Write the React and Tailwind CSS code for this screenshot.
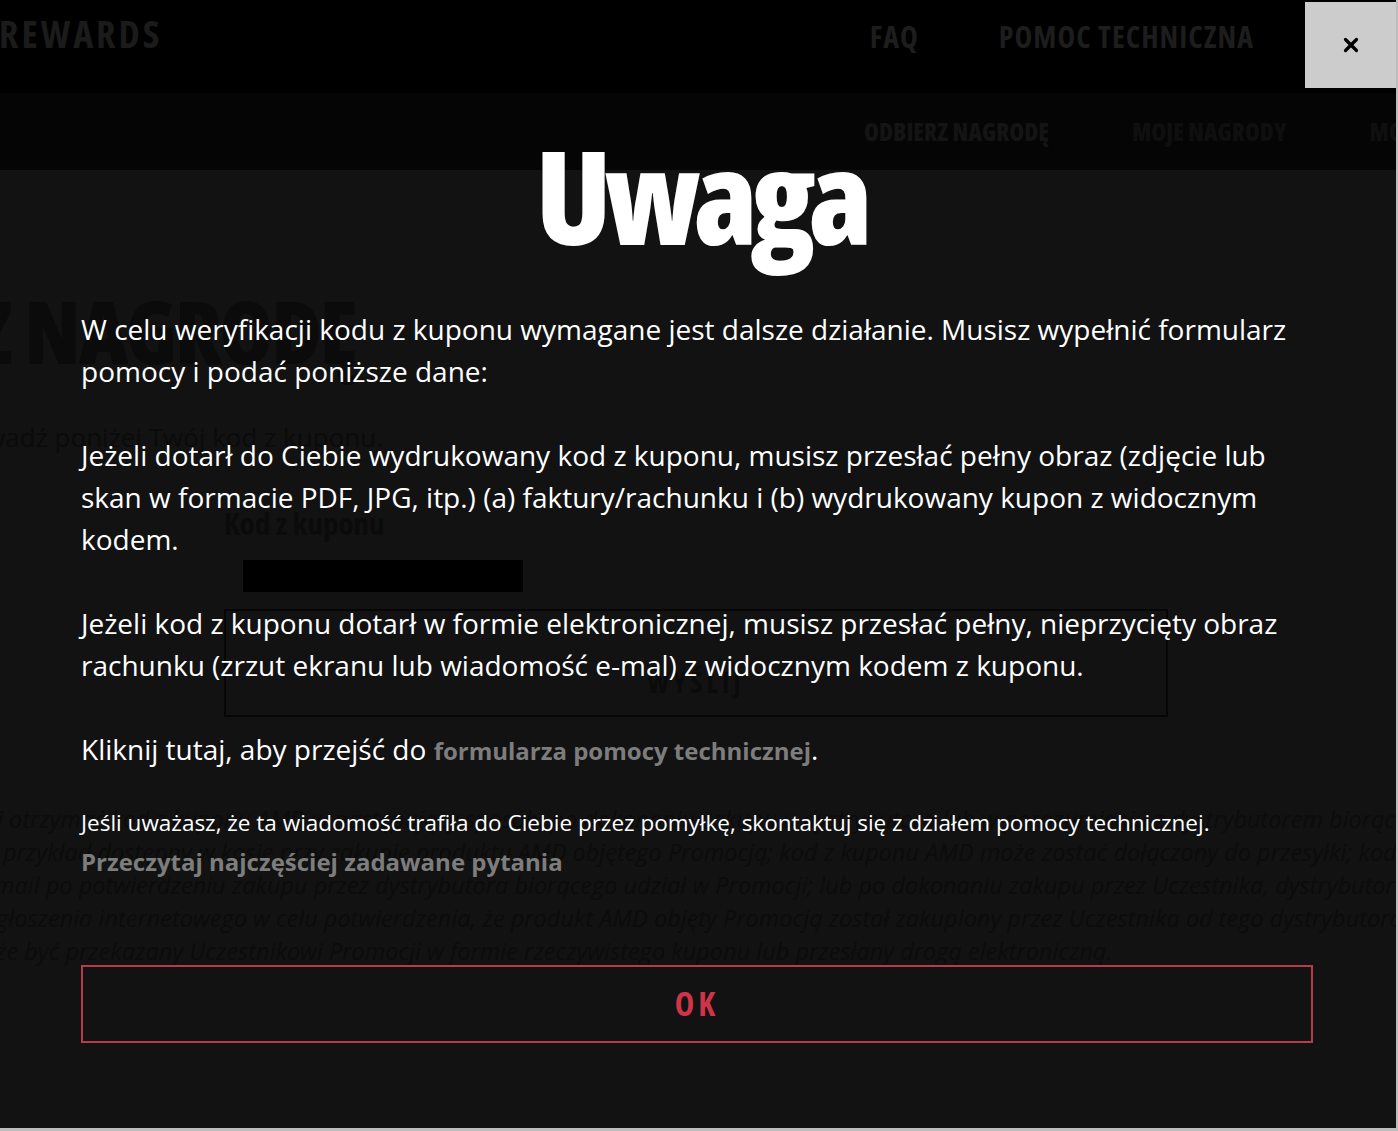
import { X } from "lucide-react";

const cond = "font-['Open_Sans','Liberation_Sans',sans-serif] [font-stretch:75%]";
const sans = "font-['Open_Sans','Liberation_Sans',sans-serif]";

function BackgroundPage() {
  return (
    <div className="flex h-full flex-col">
      <header className="flex h-[93px] shrink-0 items-start bg-black">
        <div className={`${cond} -ml-[1px] mt-[9px] text-[38px] font-bold leading-[48px] tracking-[3px] text-[#1b1b1b]`}>REWARDS</div>
        <nav className={`${cond} ml-auto mr-[142px] mt-[15px] flex gap-[80px] text-[30px] font-bold leading-[44px] tracking-[1px] text-[#1d1d1d]`}>
          <span>FAQ</span>
          <span>POMOC TECHNICZNA</span>
        </nav>
      </header>

      <div className="flex h-[77px] shrink-0 items-center gap-[83px] overflow-hidden bg-[#050505] pl-[864px]">
        <span className={`${cond} whitespace-nowrap text-[24px] font-extrabold text-[#141414]`}>ODBIERZ NAGRODĘ</span>
        <span className={`${cond} whitespace-nowrap text-[24px] font-extrabold text-[#0f0f0f]`}>MOJE NAGRODY</span>
        <span className={`${cond} whitespace-nowrap text-[24px] font-extrabold text-[#0f0f0f]`}>MOJE KONTO</span>
      </div>

      <main className="flex-1 overflow-hidden bg-[#121212]">
        <h1 className={`${cond} -ml-[277px] mt-[118px] whitespace-nowrap text-[86px] font-extrabold leading-[86px] tracking-[-2px] text-[#0b0b0b]`}>
          ODBIERZ NAGRODĘ
        </h1>
        <p className={`${sans} -ml-[81px] mt-[45px] whitespace-nowrap text-[26px] leading-[36px] text-[#0b0b0b]`}>
          Wprowadź poniżej Twój kod z kuponu.
        </p>

        <div className="ml-[224px] mt-[48px] w-[944px]">
          <label className={`${cond} block text-[31px] font-bold leading-[40px] text-[#0b0b0b]`}>Kod z kuponu</label>
          <div className="ml-[19px] mt-[17px] h-[32px] w-[280px] bg-black" />
          <div className="mt-[17px] flex h-[108px] items-end justify-center border-2 border-[#060606] pb-[12px]">
            <span className={`${cond} text-[28px] font-bold tracking-[4px] text-[#0b0b0b]`}>WYŚLIJ</span>
          </div>
        </div>

        <div className={`${sans} mt-[86px] whitespace-nowrap text-[23.5px] italic leading-[33px] text-[#0c0c0c]`}>
          <p className="-ml-[3px]">j otrzymać kod z kuponu AMD w następujący sposób: po dokonaniu zakupu u dystrybutora lub w porozumieniu z dystrybutorem biorąc</p>
          <p className="ml-[3px]">przykład dostępny w kasie przy zakupie produktu AMD objętego Promocją; kod z kuponu AMD może zostać dołączony do przesyłki; kod z kuponu</p>
          <p className="-ml-[6px]">mail po potwierdzeniu zakupu przez dystrybutora biorącego udział w Promocji; lub po dokonaniu zakupu przez Uczestnika, dystrybutor biorący</p>
          <p className="-ml-[4px]">głoszenia internetowego w celu potwierdzenia, że produkt AMD objęty Promocją został zakupiony przez Uczestnika od tego dystrybutora w okresie</p>
          <p className="-ml-[4px]">że być przekazany Uczestnikowi Promocji w formie rzeczywistego kuponu lub przesłany drogą elektroniczną.</p>
        </div>
      </main>
    </div>
  );
}

function NoticeModal() {
  return (
    <div className="absolute inset-0 flex flex-col items-center pl-[81px] pr-[83px]">
      <button
        type="button"
        className="absolute right-0 top-[2px] flex h-[86px] w-[91px] items-center justify-center bg-[#cccccc] text-black"
      >
        <X size={22} strokeWidth={3.5} />
      </button>

      <h2 className={`${cond} mt-[120px] pl-[7px] text-[130px] font-extrabold leading-[150px] tracking-[-7px] text-white`}>Uwaga</h2>

      <div className={`${sans} mt-[38px] w-full text-[28px] leading-[42px] text-white`}>
        <p>
          W celu weryfikacji kodu z kuponu wymagane jest dalsze działanie. Musisz wypełnić formularz pomocy i podać poniższe dane:
        </p>
        <p className="mt-[42px]">
          Jeżeli dotarł do Ciebie wydrukowany kod z kuponu, musisz przesłać pełny obraz (zdjęcie lub skan w formacie PDF, JPG, itp.) (a)
          faktury/rachunku i (b) wydrukowany kupon z widocznym kodem.
        </p>
        <p className="mt-[42px]">
          Jeżeli kod z kuponu dotarł w formie elektronicznej, musisz przesłać pełny, nieprzycięty obraz rachunku (zrzut ekranu lub wiadomość
          e-mal) z widocznym kodem z kuponu.
        </p>
        <p className="mt-[42px]">
          Kliknij tutaj, aby przejść do{" "}
          <a href="#" className="text-[24px] font-bold text-[#7d7d7d]">
            formularza pomocy technicznej
          </a>
          .
        </p>

        <p className="mt-[35px] text-[22.5px] leading-[32px]">
          Jeśli uważasz, że ta wiadomość trafiła do Ciebie przez pomyłkę, skontaktuj się z działem pomocy technicznej.
        </p>
        <a href="#" className="mt-[5px] block text-[24px] font-bold leading-[36px] text-[#7d7d7d]">
          Przeczytaj najczęściej zadawane pytania
        </a>

        <button
          type="button"
          className={`${cond} mt-[85px] flex h-[78px] w-full items-center justify-center border-2 border-[#b73b4b] text-[33px] font-bold tracking-[4px] text-[#cf3449]`}
        >
          OK
        </button>
      </div>
    </div>
  );
}

export default function App() {
  return (
    <div className="relative h-[1131px] w-full overflow-hidden border-b-[3px] border-r-2 border-[#bdbdbd]">
      <BackgroundPage />
      <NoticeModal />
    </div>
  );
}
